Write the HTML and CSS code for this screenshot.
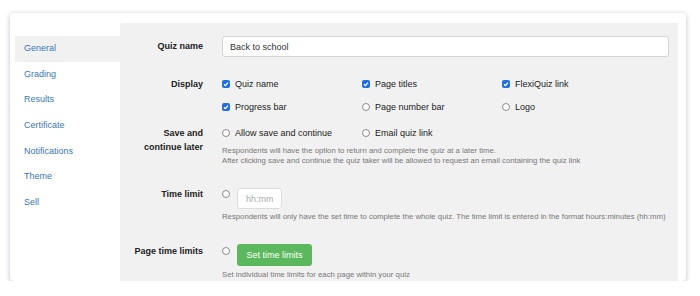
FILE: index.html
```html
<!DOCTYPE html>
<html lang="en">
<head>
    <meta charset="UTF-8">
    <title>Quiz settings</title>
    <link rel="stylesheet" href="styles.css">
</head>
<body>
<div class="card">
    <ul class="menu">
        <li class="active"><a href="#">General</a></li>
        <li><a href="#">Grading</a></li>
        <li><a href="#">Results</a></li>
        <li><a href="#">Certificate</a></li>
        <li><a href="#">Notifications</a></li>
        <li><a href="#">Theme</a></li>
        <li><a href="#">Sell</a></li>
    </ul>
    <div class="panel">
        <div class="row row-name">
            <div class="label">Quiz name</div>
            <div class="field">
                <input class="text" type="text" value="Back to school">
            </div>
        </div>

        <div class="row row-display">
            <div class="label">Display</div>
            <div class="field options">
                <label class="opt"><span class="box on"><svg viewBox="0 0 8 8"><path d="M2 4.2 L3.4 5.6 L6 2.6"/></svg></span>Quiz name</label>
                <label class="opt"><span class="box on"><svg viewBox="0 0 8 8"><path d="M2 4.2 L3.4 5.6 L6 2.6"/></svg></span>Page titles</label>
                <label class="opt"><span class="box on"><svg viewBox="0 0 8 8"><path d="M2 4.2 L3.4 5.6 L6 2.6"/></svg></span>FlexiQuiz link</label>
                <label class="opt"><span class="box on"><svg viewBox="0 0 8 8"><path d="M2 4.2 L3.4 5.6 L6 2.6"/></svg></span>Progress bar</label>
                <label class="opt"><span class="box"></span>Page number bar</label>
                <label class="opt"><span class="box"></span>Logo</label>
            </div>
        </div>

        <div class="row row-save">
            <div class="label">Save and<br>continue later</div>
            <div class="field">
                <div class="options">
                    <label class="opt"><span class="box"></span>Allow save and continue</label>
                    <label class="opt"><span class="box"></span>Email quiz link</label>
                </div>
                <p class="help">Respondents will have the option to return and complete the quiz at a later time.<br>After clicking save and continue the quiz taker will be allowed to request an email containing the quiz link</p>
            </div>
        </div>

        <div class="row row-time">
            <div class="label">Time limit</div>
            <div class="field">
                <div class="inline">
                    <span class="box"></span>
                    <input class="time" type="text" placeholder="hh:mm">
                </div>
                <p class="help">Respondents will only have the set time to complete the whole quiz. The time limit is entered in the format hours:minutes (hh:mm)</p>
            </div>
        </div>

        <div class="row row-page">
            <div class="label">Page time limits</div>
            <div class="field">
                <div class="inline">
                    <span class="box"></span>
                    <button class="btn">Set time limits</button>
                </div>
                <p class="help">Set individual time limits for each page within your quiz</p>
            </div>
        </div>
    </div>
</div>
</body>
</html>
```

FILE: styles.css
```css
body {
    margin: 0;
    background-color: #ffffff;
    font-family: "Liberation Sans", Arial, sans-serif;
    font-size: 9px;
    color: #222;
}

.card {
    display: flex;
    margin: 13px 0 0 10px;
    width: 676px;
    height: 268px;
    box-sizing: border-box;
    padding: 10px 8px 0 5px;
    background-color: #fff;
    border-radius: 4px;
    box-shadow: 0 1px 5px rgba(40, 40, 80, 0.32);
    overflow: hidden;
}

.menu {
    list-style: none;
    margin: 0;
    padding: 13px 0 0 0;
    width: 105px;
}

.menu li {
    height: 25.7px;
    line-height: 25px;
    padding-left: 9px;
}

.menu li.active {
    background-color: #f1f1f1;
}

.menu a {
    color: #3a78b8;
    text-decoration: none;
}

.panel {
    flex: 1;
    background-color: #f1f1f1;
    border-top-left-radius: 3px;
    padding: 13px 9px 0 0;
}

.row {
    display: flex;
    align-items: flex-start;
}

.label {
    width: 83px;
    margin-right: 19px;
    text-align: right;
    font-weight: bold;
    line-height: 14px;
    color: #222;
    flex-shrink: 0;
}

.field {
    flex: 1;
}

.row-name .label {
    line-height: 21px;
}

.text {
    display: block;
    width: 100%;
    height: 21px;
    box-sizing: border-box;
    border: 1px solid #d4d4d4;
    border-radius: 3px;
    padding: 0 7px;
    font-family: inherit;
    font-size: 9px;
    color: #333;
    background: #fff;
}

.options {
    display: grid;
    grid-template-columns: 140px 140px 140px;
    row-gap: 9px;
}

.opt {
    display: flex;
    align-items: center;
    height: 14px;
    color: #222;
}

.box {
    display: inline-block;
    width: 8px;
    height: 8px;
    box-sizing: border-box;
    border: 1px solid #8a8a8a;
    border-radius: 50%;
    background: #fff;
    margin-right: 5px;
    flex-shrink: 0;
}

.box.on {
    border: none;
    border-radius: 2px;
    background-color: #1f6fe0;
}

.box svg {
    display: block;
    width: 8px;
    height: 8px;
    fill: none;
    stroke: #fff;
    stroke-width: 1.3;
}

.row-display {
    margin-top: 20px;
}

.row-save {
    margin-top: 12px;
}

.help {
    margin: 6px 0 0 0;
    font-size: 7.75px;
    line-height: 9.5px;
    color: #777;
}

.row-time {
    margin-top: 22px;
}

.inline {
    display: flex;
    align-items: flex-start;
}

.inline .box {
    margin-top: 3px;
    margin-right: 7px;
}

.time {
    width: 45px;
    height: 21px;
    box-sizing: border-box;
    margin-top: 1px;
    border: 1px solid #dcdcdc;
    border-radius: 3px;
    padding: 0 8px;
    font-family: inherit;
    font-size: 9px;
    background: #fff;
}

.time::placeholder {
    color: #aaa;
}

.row-time .help {
    margin-top: 3px;
}

.row-page {
    margin-top: 22px;
}

.btn {
    height: 22px;
    width: 75px;
    padding: 0;
    border: none;
    border-radius: 3px;
    background-color: #5cb85c;
    color: #fff;
    font-family: inherit;
    font-size: 9px;
}

.row-page .help {
    margin-top: 4px;
}
```
